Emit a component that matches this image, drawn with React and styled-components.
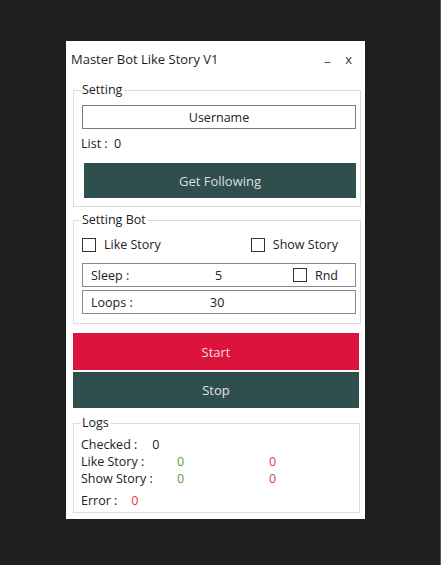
import React from 'react'
import styled, { createGlobalStyle } from 'styled-components'

const GlobalStyle = createGlobalStyle`
    html, body {
        margin: 0;
        padding: 0;
        background: #1e1e1e;
    }
    body {
        font-family: "Open Sans", "Noto Sans", sans-serif;
        font-size: 12px;
        color: #222;
    }
`;

const App = () => {
    return (
        <Page>
            <GlobalStyle/>
            <Window>
                <TitleBar>
                    <span>Master Bot Like Story V1</span>
                    <WinButtons>
                        <span>_</span>
                        <span>x</span>
                    </WinButtons>
                </TitleBar>

                <Group height={117} right={4}>
                    <Legend>Setting</Legend>
                    <Input>Username</Input>
                    <ListLabel>List :&nbsp; 0</ListLabel>
                    <DarkButton>Get Following</DarkButton>
                </Group>

                <Group height={104} right={4} top={13}>
                    <Legend>Setting Bot</Legend>
                    <CheckRow>
                        <Check>
                            <Box/>
                            <span>Like Story</span>
                        </Check>
                        <Check>
                            <Box/>
                            <span>Show Story</span>
                        </Check>
                    </CheckRow>
                    <Field top={10}>
                        <FieldLabel width={124}>Sleep :</FieldLabel>
                        <FieldValue>5</FieldValue>
                        <Check>
                            <Box/>
                            <span>Rnd</span>
                        </Check>
                    </Field>
                    <Field top={3}>
                        <FieldLabel width={119}>Loops :</FieldLabel>
                        <FieldValue>30</FieldValue>
                    </Field>
                </Group>

                <Actions>
                    <ActionButton color="#dc143c" text="#f6dde3" height={37}>Start</ActionButton>
                    <ActionButton color="#2f4f4f" text="#e2e2e2" height={36}>Stop</ActionButton>
                </Actions>

                <Group height={90} right={5} top={15}>
                    <Legend>Logs</Legend>
                    <Logs>
                        <LogRow gap={15}>
                            <span>Checked :</span>
                            <span>0</span>
                        </LogRow>
                        <LogGrid>
                            <span>Like Story :</span>
                            <Count ok>0</Count>
                            <Count>0</Count>
                            <span>Show Story :</span>
                            <Count ok>0</Count>
                            <Count>0</Count>
                        </LogGrid>
                        <LogRow gap={14} top={5}>
                            <span>Error :</span>
                            <Count>0</Count>
                        </LogRow>
                    </Logs>
                </Group>
            </Window>
        </Page>
    )
}

const Page = styled.div`
    min-height: 565px;
    padding: 41px 0 0 66px;
    box-sizing: border-box;
    border-right: 1px solid #5a5a5a;
    width: 441px;
`;

const Window = styled.div`
    width: 299px;
    height: 478px;
    background: #fff;
    box-sizing: border-box;
    padding: 0 0 0 7px;
    display: flex;
    flex-direction: column;
`;

const TitleBar = styled.div`
    height: 35px;
    display: flex;
    align-items: center;
    justify-content: space-between;
    padding: 0 13px 0 0;
    margin-left: -2px;
    font-size: 13px;
    color: #1e1e1e;
`;

const WinButtons = styled.div`
    display: flex;
    gap: 15px;
    font-size: 13px;
    color: #333;

    span:first-child {
        position: relative;
        top: -3px;
        font-weight: 600;
    }
`;

const Group = styled.div`
    position: relative;
    height: ${p => p.height}px;
    margin: ${p => (p.top || 14)}px ${p => p.right}px 0 0;
    border: 1px solid #dcdcdc;
    box-sizing: border-box;
    padding: 0 4px 0 8px;
    display: flex;
    flex-direction: column;
`;

const Legend = styled.div`
    position: absolute;
    top: -10px;
    left: 7px;
    padding: 0 2px 0 1px;
    background: #fff;
    font-size: 12.5px;
    line-height: 18px;
    color: #222;
`;

const Input = styled.div`
    margin-top: 14px;
    height: 24px;
    border: 1px solid #7a7a7a;
    box-sizing: border-box;
    display: flex;
    align-items: center;
    justify-content: center;
    font-size: 12.5px;
`;

const ListLabel = styled.div`
    margin-top: 6px;
    line-height: 18px;
    font-size: 12.5px;
    margin-left: -1px;
`;

const DarkButton = styled.div`
    margin: 10px 0 0 2px;
    height: 35px;
    background: #2f4f4f;
    color: #dedede;
    display: flex;
    align-items: center;
    justify-content: center;
    font-size: 13px;
`;

const CheckRow = styled.div`
    display: flex;
    justify-content: space-between;
    margin-top: 15px;
    padding-right: 18px;
`;

const Check = styled.label`
    display: flex;
    align-items: center;
    gap: 8px;
    font-size: 12.5px;
`;

const Box = styled.span`
    width: 14px;
    height: 14px;
    border: 1px solid #333;
    box-sizing: border-box;
    background: #fff;
`;

const Field = styled.div`
    height: 24px;
    margin-top: ${p => p.top}px;
    border: 1px solid #8a8a8a;
    box-sizing: border-box;
    display: flex;
    align-items: center;
    padding: 0 17px 0 8px;
    font-size: 12.5px;
`;

const FieldLabel = styled.span`
    width: ${p => p.width}px;
`;

const FieldValue = styled.span`
    flex: 1;
`;

const Actions = styled.div`
    margin: 9px 6px 0 0;
    display: flex;
    flex-direction: column;
    gap: 2px;
`;

const ActionButton = styled.div`
    height: ${p => p.height}px;
    background: ${p => p.color};
    color: ${p => p.text};
    display: flex;
    align-items: center;
    justify-content: center;
    font-size: 13px;
`;

const Logs = styled.div`
    margin-top: 12px;
    font-size: 12.5px;
    margin-left: -1px;
    line-height: 17px;
`;

const LogRow = styled.div`
    display: flex;
    gap: ${p => p.gap}px;
    margin-top: ${p => p.top || 0}px;
`;

const LogGrid = styled.div`
    display: grid;
    grid-template-columns: 96px 92px auto;
`;

const Count = styled.span`
    color: ${p => p.ok ? '#5aa03c' : '#e03a3a'};
`;

export default App
